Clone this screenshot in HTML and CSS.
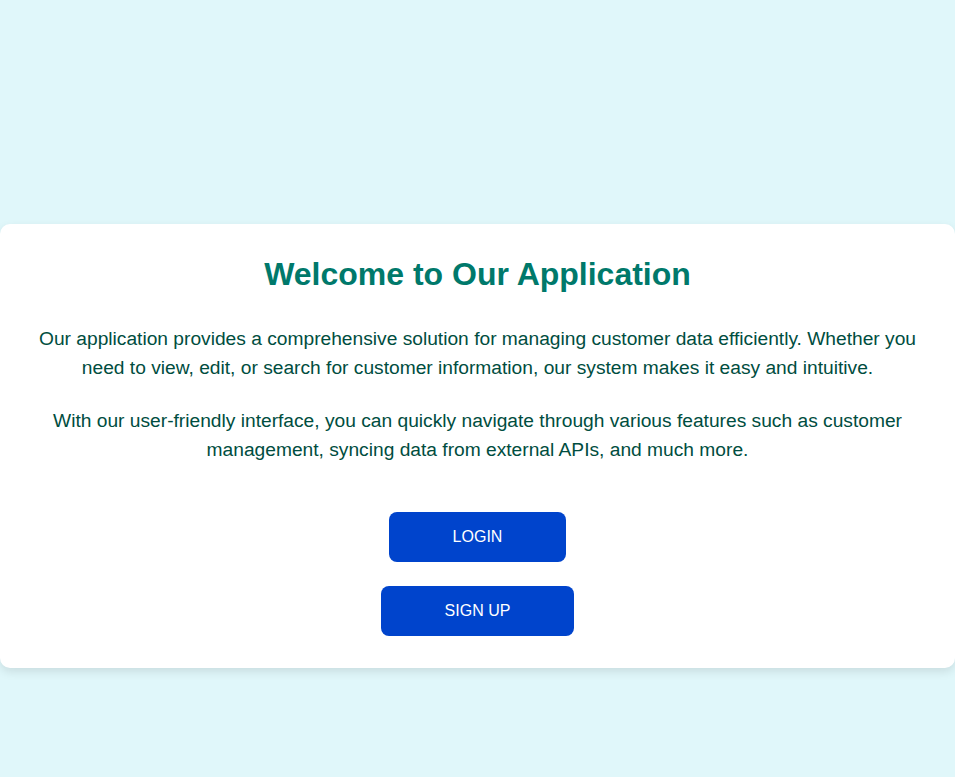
FILE: index.html
```html
<!DOCTYPE html>
<html lang="en">
<head>
<meta charset="utf-8">
<title>Welcome</title>
<link rel="stylesheet" href="styles.css">
</head>
<body>
<main class="page">
  <section class="card">
    <h1 class="title">Welcome to Our Application</h1>
    <p class="text">Our application provides a comprehensive solution for managing customer data efficiently. Whether you need to view, edit, or search for customer information, our system makes it easy and intuitive.</p>
    <p class="text">With our user-friendly interface, you can quickly navigate through various features such as customer management, syncing data from external APIs, and much more.</p>
    <div class="actions">
      <button class="btn">LOGIN</button>
      <button class="btn">SIGN UP</button>
    </div>
  </section>
</main>
</body>
</html>
```

FILE: styles.css
```css
html, body {
  margin: 0;
  padding: 0;
}
body {
  background: #e0f7fa;
  font-family: "Liberation Sans", Arial, sans-serif;
  min-height: 100vh;
}
.page {
  padding-top: 224px;
}
.card {
  background: #ffffff;
  border-radius: 10px;
  box-shadow: 0 4px 10px rgba(0, 0, 0, 0.1);
  padding: 32px 37px;
  text-align: center;
}
.title {
  margin: 0 0 31px;
  font-size: 32px;
  font-weight: bold;
  color: #00796b;
  line-height: 37px;
}
.text {
  margin: 0 0 24px;
  font-size: 19.2px;
  line-height: 29px;
  color: #004d40;
}
.actions {
  margin-top: 48px;
  display: flex;
  flex-direction: column;
  align-items: center;
  gap: 24px;
}
.btn {
  background: #0044cc;
  color: #ffffff;
  border: none;
  border-radius: 8px;
  padding: 16px 64px;
  font-family: "Liberation Sans", Arial, sans-serif;
  font-size: 16px;
  line-height: 18px;
  cursor: pointer;
}
```
